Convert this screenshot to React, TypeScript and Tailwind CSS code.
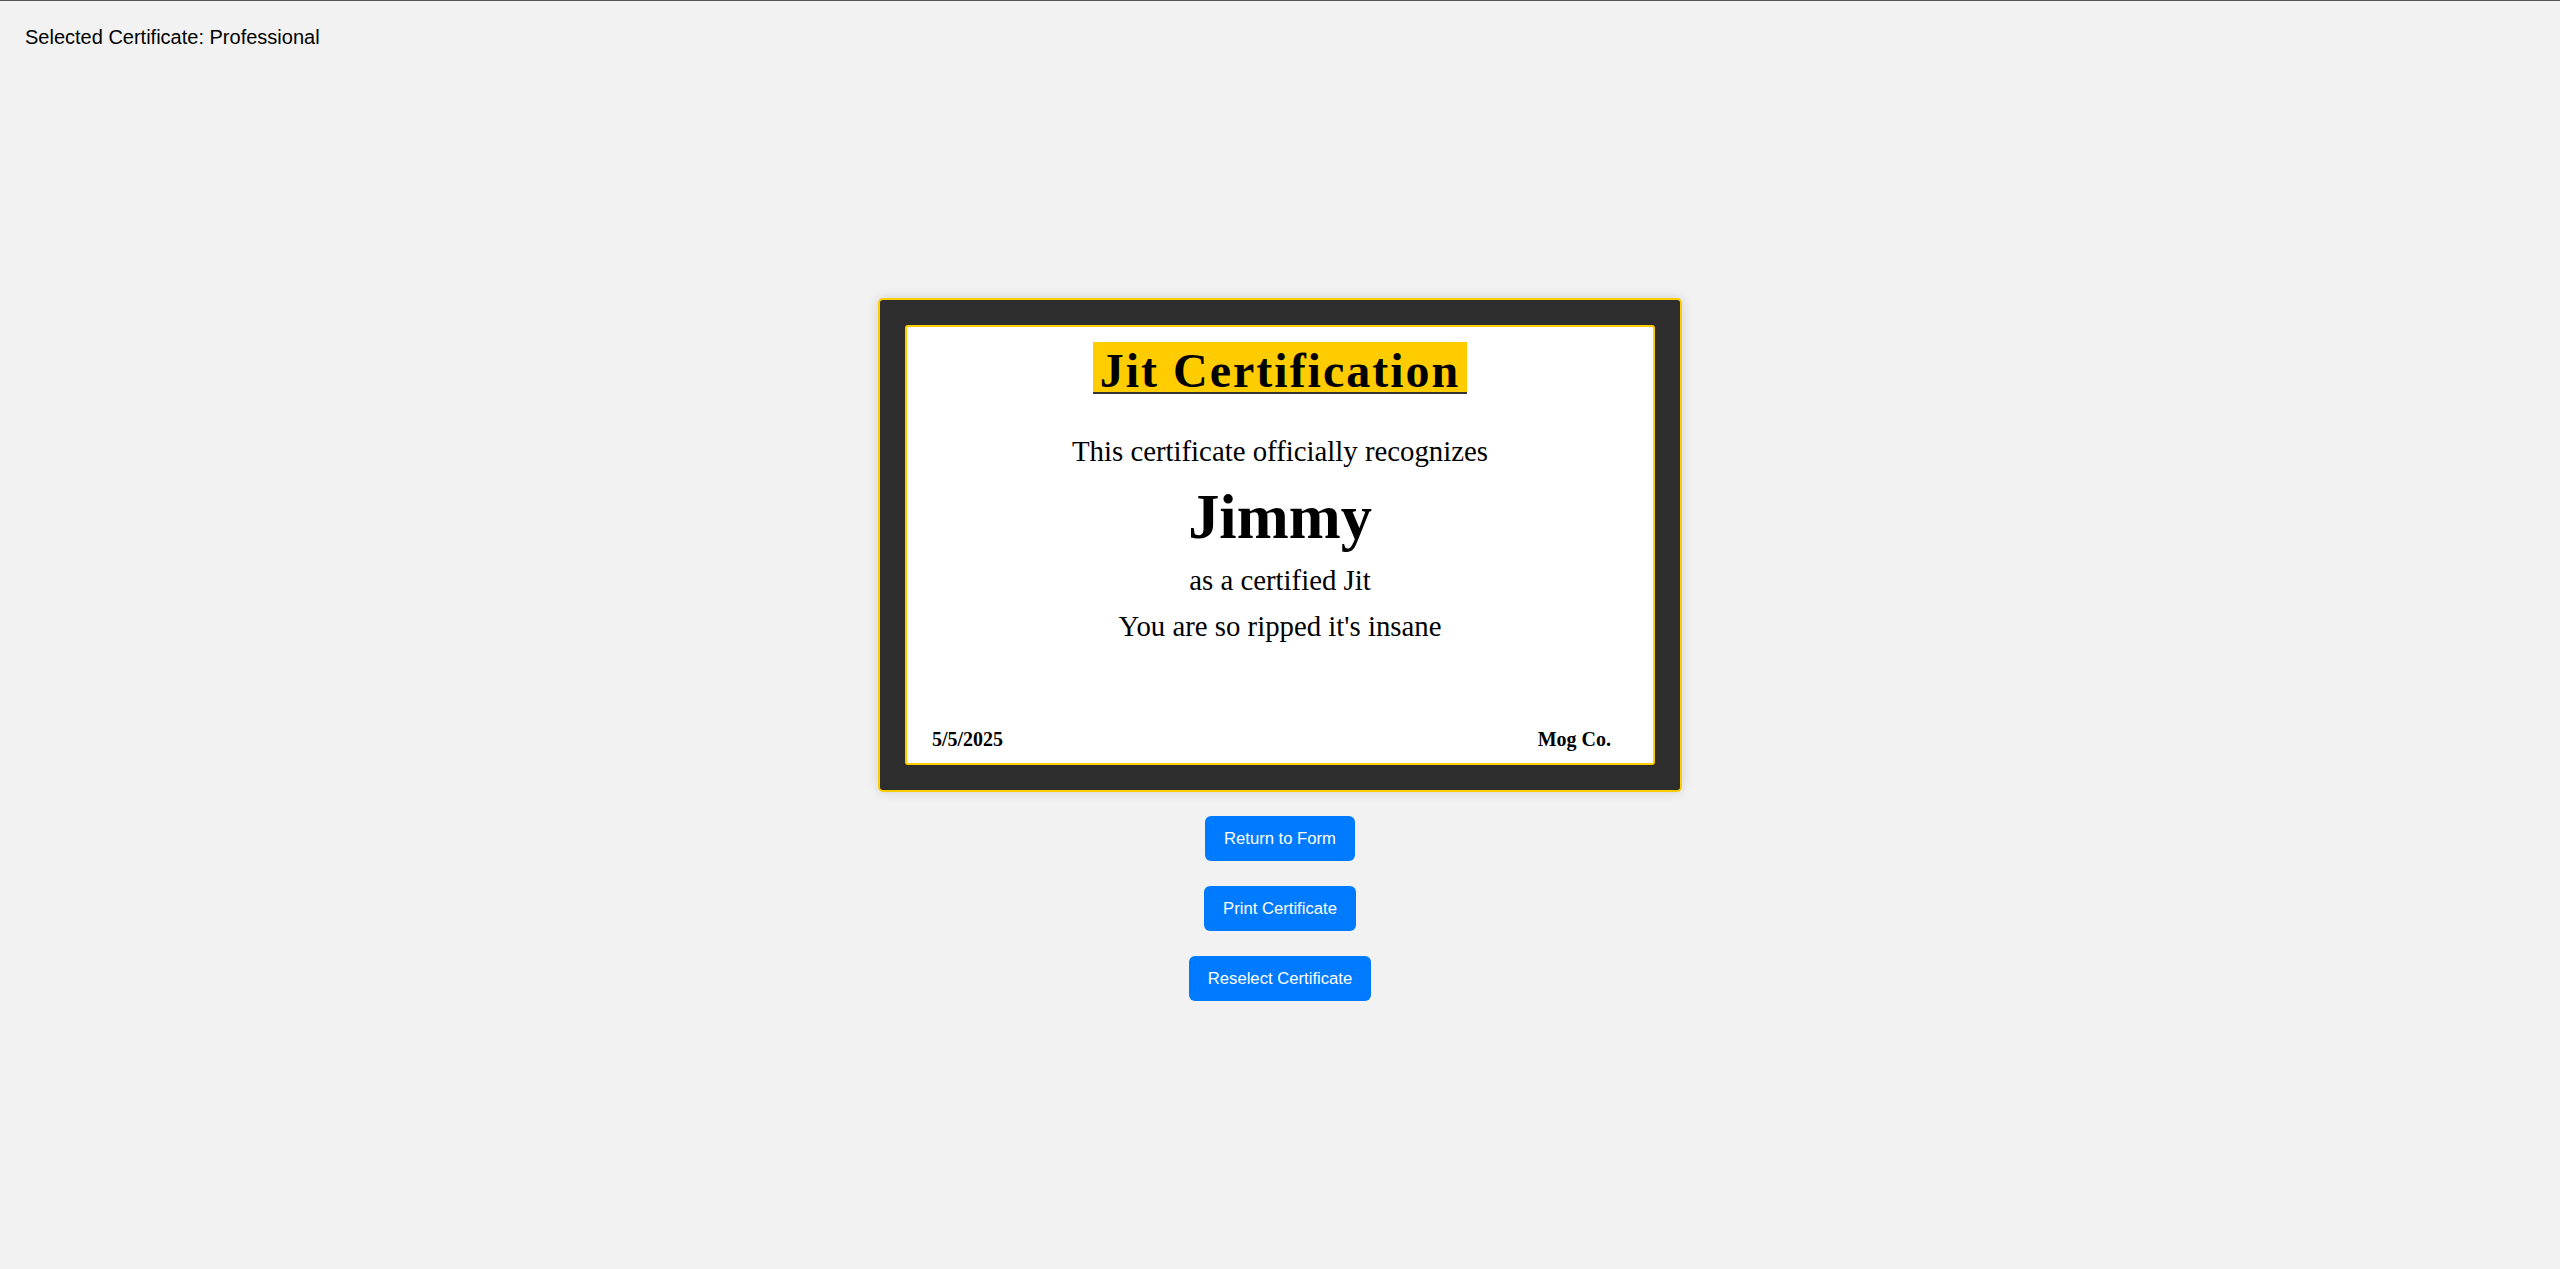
export default function App() {
  return (
    <div className="min-h-screen border-t border-[#555] bg-[#f2f2f2] px-[25px] pt-[25px] font-['Liberation_Sans',Arial,sans-serif] text-black">
      <p className="text-[20px] leading-[23px]">Selected Certificate: Professional</p>

      <div className="mt-[249px] flex flex-col items-center">
        <div className="rounded-[5px] border-2 border-[#ffcc00] bg-[#2d2d2d] p-[25px] shadow-[0_0_12px_rgba(0,0,0,0.15)]">
          <div className="flex h-[440px] w-[750px] flex-col rounded-[3px] border-2 border-[#ffcc00] bg-white text-center font-['Liberation_Serif','Times_New_Roman',serif]">
            <div className="mt-[14.5px]">
              <span className="inline-block h-[52px] border-b-2 border-[#333] bg-[#ffcc00] px-[7px] pt-[5px] text-[48px] leading-none font-bold tracking-[2px]">
                Jit Certification
              </span>
            </div>
            <p className="mt-[39px] text-[28.8px] leading-[36px]">This certificate officially recognizes</p>
            <p className="mt-[12.5px] text-[62.4px] leading-[72px] font-bold">Jimmy</p>
            <p className="mt-[9.3px] text-[28.8px] leading-[36px]">as a certified Jit</p>
            <p className="mt-[10px] text-[28.8px] leading-[36px]">You are so ripped it's insane</p>

            <div className="mt-auto flex justify-between pb-[12px] pl-[25px] pr-[42px] text-[20px] leading-[24px] font-bold">
              <span>5/5/2025</span>
              <span>Mog Co.</span>
            </div>
          </div>
        </div>

        <div className="mt-[24px] flex flex-col items-center gap-[25px]">
          <button className="rounded-[6px] bg-[#007bff] px-[18.75px] py-[12.5px] text-[16.67px] leading-[20px] text-white">
            Return to Form
          </button>
          <button className="rounded-[6px] bg-[#007bff] px-[18.75px] py-[12.5px] text-[16.67px] leading-[20px] text-white">
            Print Certificate
          </button>
          <button className="rounded-[6px] bg-[#007bff] px-[18.75px] py-[12.5px] text-[16.67px] leading-[20px] text-white">
            Reselect Certificate
          </button>
        </div>
      </div>
    </div>
  );
}
